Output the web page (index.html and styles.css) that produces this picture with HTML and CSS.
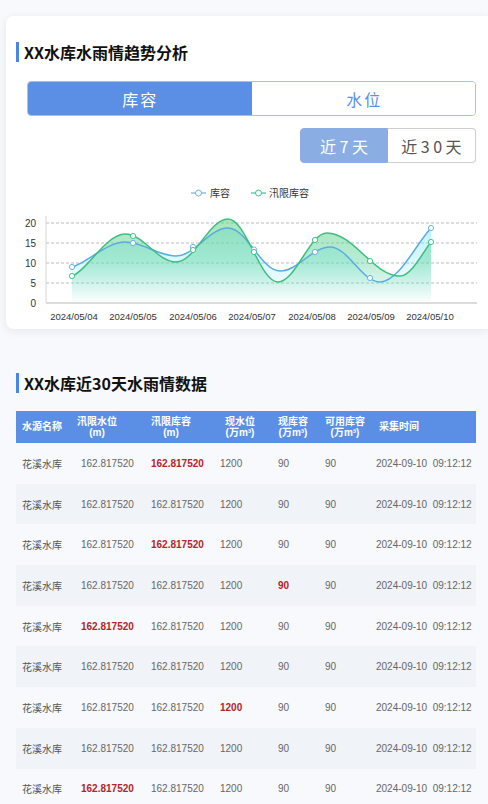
FILE: index.html
```html
<!DOCTYPE html>
<html lang="zh">
<head>
<meta charset="utf-8">
<title>XX水库水雨情</title>
<link rel="stylesheet" href="styles.css">
</head>
<body>
<div class="card">
  <div class="title">XX水库水雨情趋势分析</div>
  <div class="seg">
    <div class="seg-item active">库容</div>
    <div class="seg-item">水位</div>
  </div>
  <div class="range">
    <div class="range-item active">近7天</div>
    <div class="range-item">近30天</div>
  </div>
  <svg class="chart" width="482" height="166" viewBox="6 163 482 166" xmlns="http://www.w3.org/2000/svg">
    <defs>
      <linearGradient id="gBlue" x1="0" y1="0" x2="0" y2="1">
        <stop offset="0" stop-color="#7fe6fa" stop-opacity="0.5"/>
        <stop offset="1" stop-color="#7fe6fa" stop-opacity="0"/>
      </linearGradient>
      <linearGradient id="gGreen" x1="0" y1="0" x2="0" y2="1">
        <stop offset="0" stop-color="#6fd48a" stop-opacity="0.6"/>
        <stop offset="0.5" stop-color="#5fd5a0" stop-opacity="0.45"/>
        <stop offset="1" stop-color="#5fd5a0" stop-opacity="0"/>
      </linearGradient>
    </defs>
    <g class="legend">
      <line x1="191" y1="193" x2="206" y2="193" stroke="#6db2ea" stroke-width="1.2"/>
      <circle cx="198.5" cy="193" r="3" fill="#fff" stroke="#6db2ea" stroke-width="1"/>
      <text x="210" y="196.5">库容</text>
      <line x1="251" y1="193" x2="266" y2="193" stroke="#3cc68a" stroke-width="1.2"/>
      <circle cx="258.5" cy="193" r="3" fill="#fff" stroke="#3cc68a" stroke-width="1"/>
      <text x="269" y="196.5">汛限库容</text>
    </g>
    <g class="grid">
      <line x1="46" y1="223" x2="477" y2="223"/>
      <line x1="46" y1="243" x2="477" y2="243"/>
      <line x1="46" y1="263" x2="477" y2="263"/>
      <line x1="46" y1="283" x2="477" y2="283"/>
    </g>
    <line x1="46" y1="216" x2="46" y2="303" stroke="#d6d6d6" stroke-width="1"/>
    <g class="ylab">
      <text x="36" y="226.5">20</text>
      <text x="36" y="246.5">15</text>
      <text x="36" y="266.5">10</text>
      <text x="36" y="286.5">5</text>
      <text x="36" y="306.5">0</text>
    </g>
    <path d="M72,267 C86,264 106,242 125,242 C143.6,242 157.4,256 176,256 C194.9,256 209.1,228 228,228 C246.9,228 261.1,271 280,271 C298.2,271 311.8,247 330,247 C348.2,247 361.8,282 380,282 C398.6,282 416,244 431,228 L431,303 L72,303 Z" fill="url(#gBlue)"/>
    <path d="M72,276 C86,272 106,234 125,234 C143.6,234 157.4,262 176,262 C194.9,262 209.1,219 228,219 C246.2,219 259.8,282 278,282 C295.8,282 309.2,233 327,233 C353.6,233 373.4,276 400,276 C411.3,276 423,252 431,242 L431,303 L72,303 Z" fill="url(#gGreen)"/>
    <line x1="46" y1="303" x2="477" y2="303" stroke="#d0d0d0" stroke-width="1.5"/>
    <path d="M72,267 C86,264 106,242 125,242 C143.6,242 157.4,256 176,256 C194.9,256 209.1,228 228,228 C246.9,228 261.1,271 280,271 C298.2,271 311.8,247 330,247 C348.2,247 361.8,282 380,282 C398.6,282 416,244 431,228" fill="none" stroke="#5aaae3" stroke-width="1.5"/>
    <path d="M72,276 C86,272 106,234 125,234 C143.6,234 157.4,262 176,262 C194.9,262 209.1,219 228,219 C246.2,219 259.8,282 278,282 C295.8,282 309.2,233 327,233 C353.6,233 373.4,276 400,276 C411.3,276 423,252 431,242" fill="none" stroke="#3cbf7e" stroke-width="1.5"/>
    <g class="dots-b">
      <circle cx="72" cy="267" r="2.6"/>
      <circle cx="133" cy="243" r="2.6"/>
      <circle cx="193" cy="247" r="2.6"/>
      <circle cx="254" cy="249.5" r="2.6"/>
      <circle cx="315" cy="252" r="2.6"/>
      <circle cx="370" cy="278" r="2.6"/>
      <circle cx="431" cy="228" r="2.6"/>
    </g>
    <g class="dots-g">
      <circle cx="72" cy="276" r="2.6"/>
      <circle cx="133" cy="236" r="2.6"/>
      <circle cx="193" cy="250" r="2.6"/>
      <circle cx="254" cy="252" r="2.6"/>
      <circle cx="315" cy="240" r="2.6"/>
      <circle cx="370" cy="261" r="2.6"/>
      <circle cx="431" cy="242" r="2.6"/>
    </g>
    <g class="xlab">
      <text x="74" y="319.5">2024/05/04</text>
      <text x="133" y="319.5">2024/05/05</text>
      <text x="193" y="319.5">2024/05/06</text>
      <text x="252" y="319.5">2024/05/07</text>
      <text x="312" y="319.5">2024/05/08</text>
      <text x="371" y="319.5">2024/05/09</text>
      <text x="430" y="319.5">2024/05/10</text>
    </g>
  </svg>
</div>

<div class="section">
  <div class="title">XX水库近30天水雨情数据</div>
  <div class="table">
    <div class="row thead">
      <div class="th"><div class="hb"><span>水源名称</span></div></div>
      <div class="th"><div class="hb"><span>汛限水位</span><span>(m)</span></div></div>
      <div class="th"><div class="hb"><span>汛限库容</span><span>(m)</span></div></div>
      <div class="th"><div class="hb"><span>现水位</span><span>(万m³)</span></div></div>
      <div class="th"><div class="hb"><span>现库容</span><span>(万m³)</span></div></div>
      <div class="th"><div class="hb"><span>可用库容</span><span>(万m³)</span></div></div>
      <div class="th"><div class="hb"><span>采集时间</span></div></div>
    </div>
    <div class="row">
      <div class="td">花溪水库</div><div class="td">162.817520</div><div class="td warn">162.817520</div><div class="td">1200</div><div class="td">90</div><div class="td">90</div><div class="td">2024-09-10&nbsp;&nbsp;09:12:12</div>
    </div>
    <div class="row">
      <div class="td">花溪水库</div><div class="td">162.817520</div><div class="td">162.817520</div><div class="td">1200</div><div class="td">90</div><div class="td">90</div><div class="td">2024-09-10&nbsp;&nbsp;09:12:12</div>
    </div>
    <div class="row">
      <div class="td">花溪水库</div><div class="td">162.817520</div><div class="td warn">162.817520</div><div class="td">1200</div><div class="td">90</div><div class="td">90</div><div class="td">2024-09-10&nbsp;&nbsp;09:12:12</div>
    </div>
    <div class="row">
      <div class="td">花溪水库</div><div class="td">162.817520</div><div class="td">162.817520</div><div class="td">1200</div><div class="td warn">90</div><div class="td">90</div><div class="td">2024-09-10&nbsp;&nbsp;09:12:12</div>
    </div>
    <div class="row">
      <div class="td">花溪水库</div><div class="td warn">162.817520</div><div class="td">162.817520</div><div class="td">1200</div><div class="td">90</div><div class="td">90</div><div class="td">2024-09-10&nbsp;&nbsp;09:12:12</div>
    </div>
    <div class="row">
      <div class="td">花溪水库</div><div class="td">162.817520</div><div class="td">162.817520</div><div class="td">1200</div><div class="td">90</div><div class="td">90</div><div class="td">2024-09-10&nbsp;&nbsp;09:12:12</div>
    </div>
    <div class="row">
      <div class="td">花溪水库</div><div class="td">162.817520</div><div class="td">162.817520</div><div class="td warn">1200</div><div class="td">90</div><div class="td">90</div><div class="td">2024-09-10&nbsp;&nbsp;09:12:12</div>
    </div>
    <div class="row">
      <div class="td">花溪水库</div><div class="td">162.817520</div><div class="td">162.817520</div><div class="td">1200</div><div class="td">90</div><div class="td">90</div><div class="td">2024-09-10&nbsp;&nbsp;09:12:12</div>
    </div>
    <div class="row">
      <div class="td">花溪水库</div><div class="td warn">162.817520</div><div class="td">162.817520</div><div class="td">1200</div><div class="td">90</div><div class="td">90</div><div class="td">2024-09-10&nbsp;&nbsp;09:12:12</div>
    </div>
  </div>
</div>
</body>
</html>
```

FILE: styles.css
```css
* { box-sizing: border-box; }
html, body { margin: 0; padding: 0; }
body {
  background: #f7f9fc;
  font-family: "Liberation Sans", "Noto Sans CJK SC", sans-serif;
  color: #333;
  overflow: hidden;
}
.card {
  margin: 16px 0 0 6px;
  background: #fff;
  border-radius: 8px 0 0 8px;
  box-shadow: 0 2px 8px rgba(30, 50, 90, 0.09);
  padding: 26px 12px 0 10px;
}
.title {
  font-family: "Noto Sans CJK SC", sans-serif;
  font-weight: 700;
  font-size: 16px;
  line-height: 20px;
  height: 20px;
  color: #111;
  border-left: 3px solid #4a86e8;
  padding-left: 5px;
}
.seg {
  margin: 19px 0 0 11px;
  height: 35px;
  display: grid;
  grid-template-columns: 1fr 1fr;
  border: 1px solid #a8c0e8;
  border-radius: 4px;
  overflow: hidden;
}
.seg-item {
  display: flex;
  align-items: center;
  justify-content: center;
  font-family: "Noto Sans CJK SC", sans-serif;
  font-size: 16px;
  letter-spacing: 2px;
  text-indent: 2px;
  color: #5b8fe6;
  background: #fff;
}
.seg-item.active {
  background: #5b8fe6;
  color: #fff;
  margin: -1px 0 -1px -1px;
}
.range {
  margin-top: 12px;
  display: flex;
  justify-content: flex-end;
}
.range-item {
  width: 88px;
  height: 35px;
  display: flex;
  align-items: center;
  justify-content: center;
  font-family: "Noto Sans CJK SC", sans-serif;
  font-size: 16px;
  letter-spacing: 3.5px;
  text-indent: 3.5px;
  color: #555;
  border: 1px solid #cfcfcf;
  border-left: none;
  border-radius: 0 4px 4px 0;
  background: #fff;
}
.range-item.active {
  background: #8aaee3;
  border: 1px solid #8aaee3;
  color: #fff;
  border-radius: 4px 0 0 4px;
}
.chart {
  display: block;
  margin-left: -10px;
}
.chart text {
  font-family: "Liberation Sans", "Noto Sans CJK SC", sans-serif;
  fill: #333;
}
.legend text { font-size: 10px; font-family: "Noto Sans CJK SC", sans-serif; }
.grid line { stroke: #a9a9a9; stroke-width: 0.8; stroke-dasharray: 3 2; }
.ylab text { font-size: 10px; text-anchor: end; }
.xlab text { font-size: 9.5px; text-anchor: middle; }
.dots-b circle { fill: #fff; stroke: #6db2ea; stroke-width: 1; }
.dots-g circle { fill: #fff; stroke: #3cc68a; stroke-width: 1; }

.section {
  padding: 44px 12px 0 16px;
}
.table { margin-top: 18px; }
.row {
  display: grid;
  grid-template-columns: 59px 70px 69px 58px 47px 51px 106px;
  height: 40.7px;
  align-items: center;
}
.row:nth-child(odd) { background: #f0f3f7; }
.row.thead {
  height: 32px;
  background: #5b8fe6;
}
.th {
  color: #fff;
  font-family: "Liberation Sans", "Noto Sans CJK SC", sans-serif;
  font-weight: 700;
  font-size: 10px;
  line-height: 11.5px;
  padding-left: 6px;
}
.hb {
  display: inline-flex;
  flex-direction: column;
  align-items: center;
}
.hb span { display: block; height: 11.5px; }
.th:nth-child(2) { padding-left: 2px; }
.th:nth-child(4) { padding-left: 11px; }
.th:nth-child(7) { padding-left: 9px; }
.td {
  font-size: 10px;
  color: #666;
  padding-left: 6px;
  white-space: nowrap;
}
.td:first-child { font-family: "Noto Sans CJK SC", sans-serif; color: #555; }
.td.warn { color: #b3232a; font-weight: 700; }
```
